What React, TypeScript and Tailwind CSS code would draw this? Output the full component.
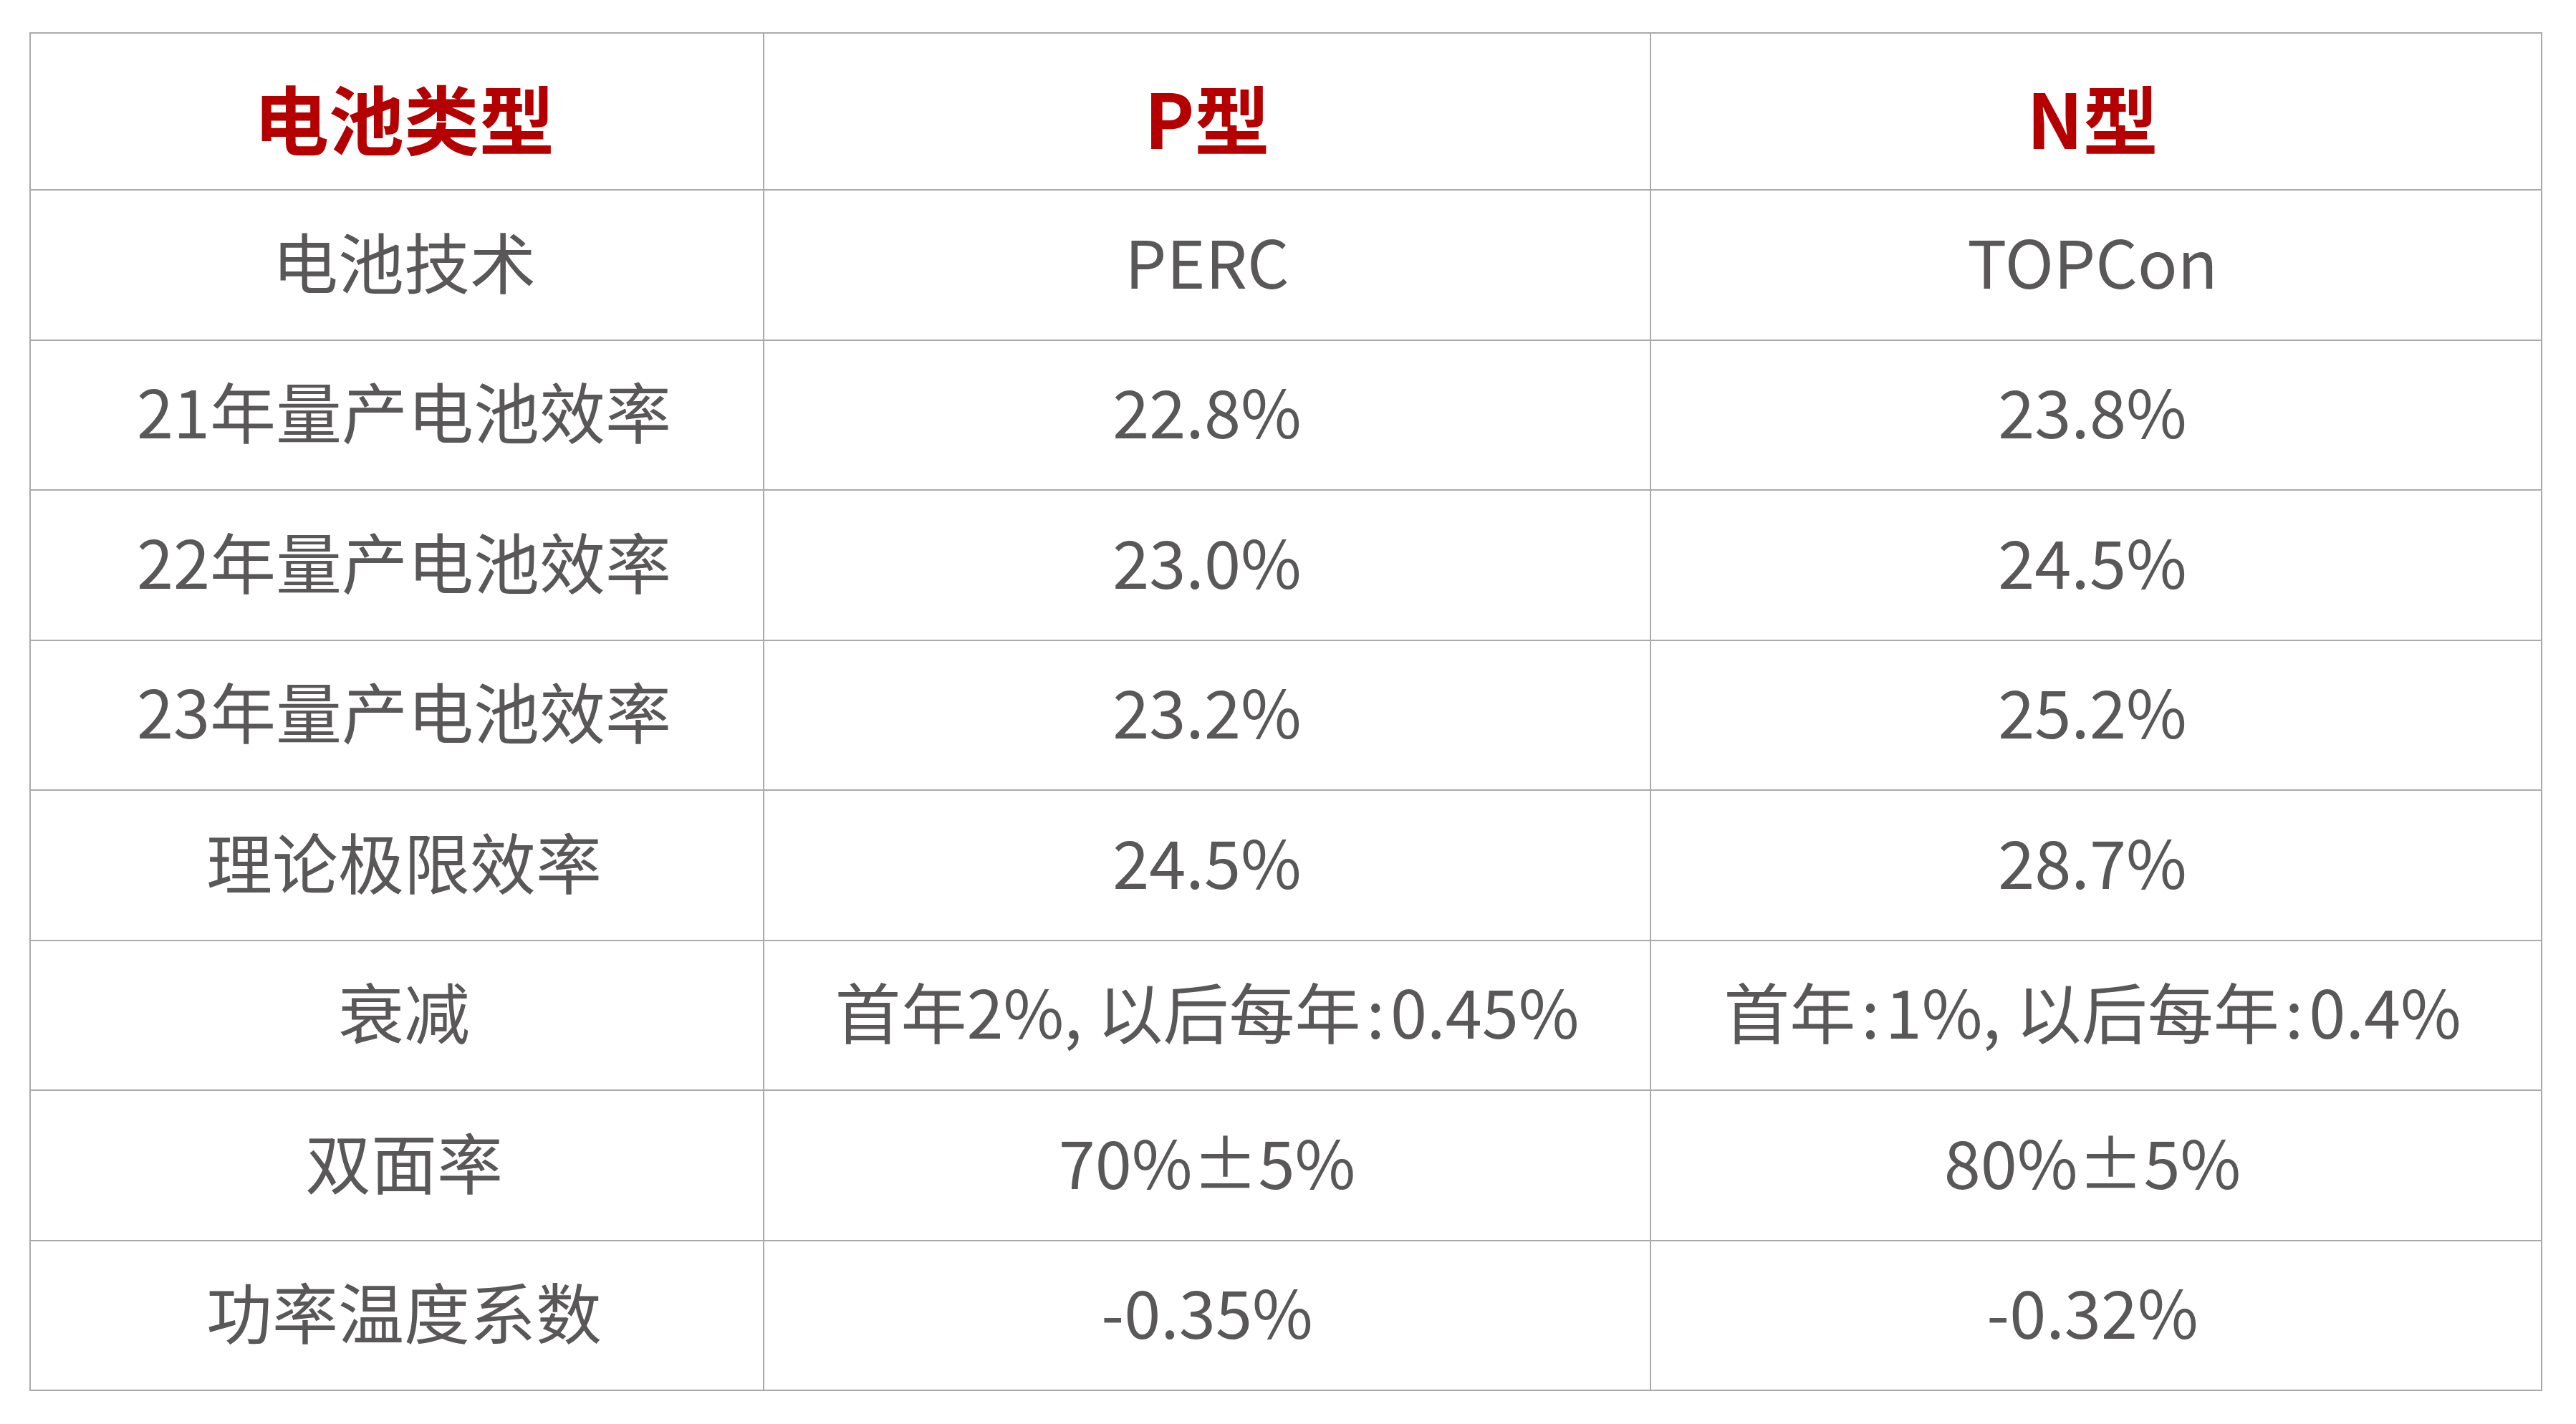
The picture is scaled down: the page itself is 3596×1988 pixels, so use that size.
const HEADERS = ["电池类型", "P型", "N型"];

const ROWS: [string, string, string][] = [
  ["电池技术", "PERC", "TOPCon"],
  ["21年量产电池效率", "22.8%", "23.8%"],
  ["22年量产电池效率", "23.0%", "24.5%"],
  ["23年量产电池效率", "23.2%", "25.2%"],
  ["理论极限效率", "24.5%", "28.7%"],
  ["衰减", "首年2%, 以后每年:0.45%", "首年:1%, 以后每年:0.4%"],
  ["双面率", "70%±5%", "80%±5%"],
  ["功率温度系数", "-0.35%", "-0.32%"],
];

const PAD = ["pl-[20px]", "", "pr-[10px]"];

// colons in the source sit with a little air on both sides
function CellText({ text }: { text: string }) {
  const parts = text.split(":");
  return (
    <>
      {parts.map((p, i) => (
        <span key={i}>
          {i > 0 && <span className="mx-[8px]">:</span>}
          {p}
        </span>
      ))}
    </>
  );
}

export default function App() {
  return (
    <div
      className="min-h-screen bg-white pl-[41px] pt-[45px]"
      style={{ fontFamily: '"Noto Sans CJK SC", "Noto Sans", sans-serif' }}
    >
      <table className="w-[3506px] table-fixed border-collapse">
        <colgroup>
          <col className="w-[1024px]" />
          <col className="w-[1238px]" />
          <col className="w-[1244px]" />
        </colgroup>
        <thead>
          <tr className="h-[219px]">
            {HEADERS.map((h, i) => (
              <th
                key={h}
                className={`border-2 border-[#aaaaaa] pt-[14px] text-center align-middle text-[105px] font-bold leading-none text-[#b40000] ${PAD[i]}`}
              >
                {h}
              </th>
            ))}
          </tr>
        </thead>
        <tbody>
          {ROWS.map((row) => (
            <tr key={row[0]} className="h-[209.5px]">
              {row.map((cell, i) => (
                <td
                  key={i}
                  className={`border-2 border-[#aaaaaa] pb-[14px] text-center align-middle text-[92px] leading-none whitespace-pre text-[#595757] ${PAD[i]}`}
                >
                  <CellText text={cell} />
                </td>
              ))}
            </tr>
          ))}
        </tbody>
      </table>
    </div>
  );
}
